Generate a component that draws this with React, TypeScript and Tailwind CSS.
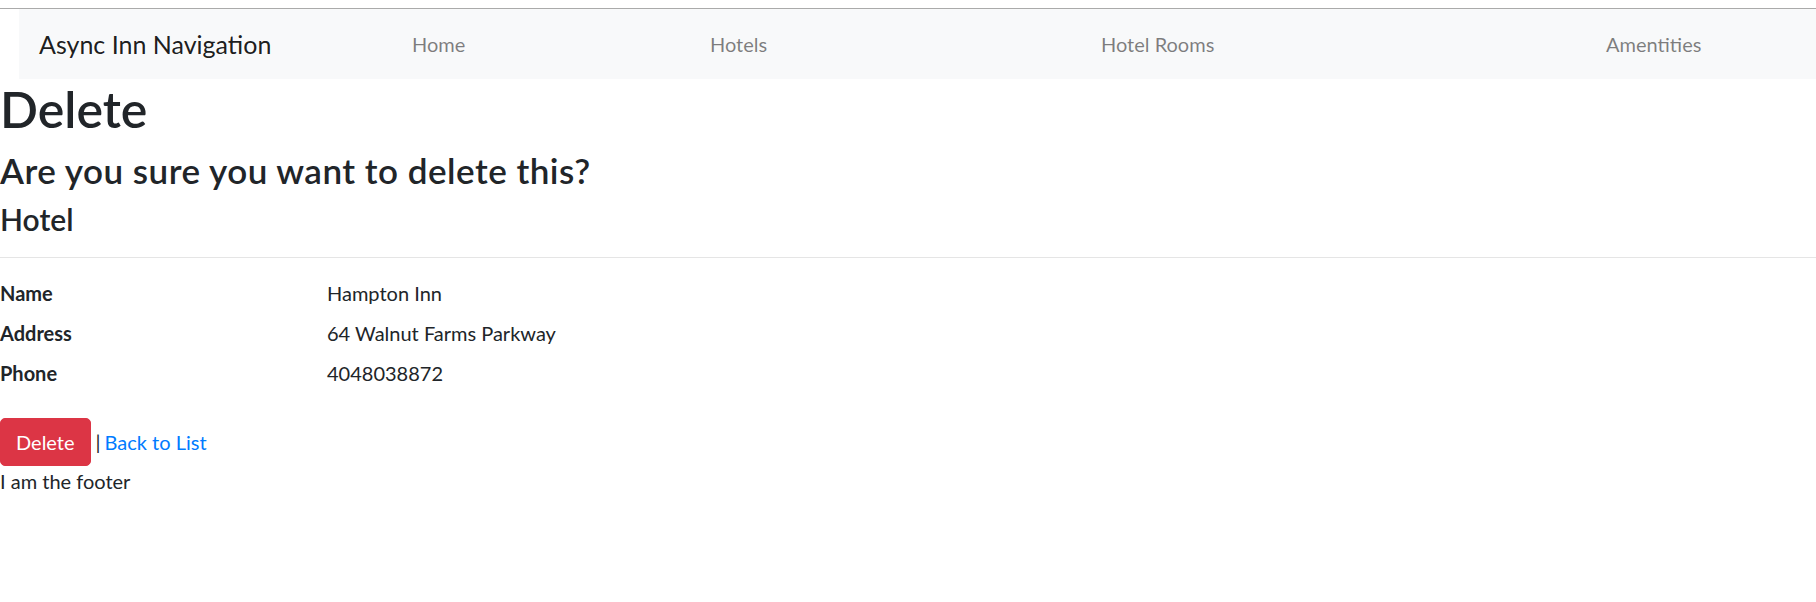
export default function App() {
  const rows = [
    { label: "Name", value: "Hampton Inn" },
    { label: "Address", value: "64 Walnut Farms Parkway" },
    { label: "Phone", value: "4048038872" },
  ];

  return (
    <div className="min-h-[602px] bg-white text-[#212529] font-['Lato',sans-serif] text-[20px] leading-[30px]">
      {/* header */}
      <div className="pt-[8px]">
        <div className="h-px bg-[#aaaaaa]" />
        <nav className="ml-[19px] h-[70px] bg-[#f8f9fa] flex items-center pl-[20px]">
          <span className="text-[25px] leading-[30px] text-[rgba(0,0,0,0.9)] w-[373px] shrink-0">Async Inn Navigation</span>
          <div className="flex items-center text-[rgba(0,0,0,0.5)] text-[20px]">
            <a className="w-[298px]">Home</a>
            <a className="w-[391px]">Hotels</a>
            <a className="w-[505px]">Hotel Rooms</a>
            <a>Amentities</a>
          </div>
        </nav>
      </div>

      <main>
        <h1 className="text-[50px] leading-[60px] font-semibold mb-[10px]">Delete</h1>
        <h3 className="text-[35px] leading-[42px] font-semibold tracking-[0.5px] mb-[10px]">Are you sure you want to delete this?</h3>
        <h4 className="text-[30px] leading-[36px] font-semibold">Hotel</h4>
        <hr className="mt-[20px] mb-[20px] border-t border-[rgba(0,0,0,0.1)]" />

        <dl className="flex flex-col mb-[20px]">
          {rows.map((r) => (
            <div key={r.label} className="flex mb-[10px]">
              <dt className="w-[327px] font-bold">{r.label}</dt>
              <dd>{r.value}</dd>
            </div>
          ))}
        </dl>

        <div className="flex items-baseline">
          <button className="bg-[#dc3545] border border-[#dc3545] text-white rounded-[5px] px-[15px] py-[8px] leading-[30px]">
            Delete
          </button>
          <span className="ml-[5px]">|</span>
          <a className="ml-[4px] text-[#007bff]">Back to List</a>
        </div>
      </main>

      <footer>I am the footer</footer>
    </div>
  );
}
